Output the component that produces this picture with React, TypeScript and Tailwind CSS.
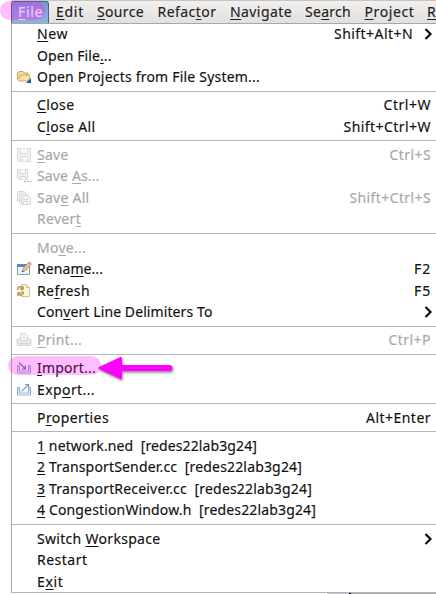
import React, { useLayoutEffect, useRef } from "react";

type LabelProps = { text: string; width: number };

// A label with an underlined mnemonic: the character after "&".
// Letter spacing is set so that the label fills its column width.
function Label({ text, width }: LabelProps) {
  const ref = useRef<HTMLSpanElement>(null);
  const at = text.indexOf("&");
  const plain = text.replace("&", "");
  useLayoutEffect(() => {
    const el = ref.current;
    if (!el) return;
    el.style.letterSpacing = "0px";
    const natural = el.getBoundingClientRect().width;
    el.style.letterSpacing = `${(width - natural) / plain.length}px`;
  }, [plain, width]);
  return (
    <span ref={ref} className="inline-block shrink-0 whitespace-pre">
      {at < 0 ? (
        plain
      ) : (
        <>
          {plain.slice(0, at)}
          <span className="underline decoration-1 underline-offset-2">{plain[at]}</span>
          {plain.slice(at + 1)}
        </>
      )}
    </span>
  );
}

function FolderIcon() {
  return (
    <svg width="16" height="16" viewBox="0 0 16 16">
      <path d="M1.5 10.500V4L3 2.5h4L8.500 4H12v3" fill="#f3d9a0" stroke="#c6a063" />
      <path d="M1.500 10.500l1.500 1.500h9.500l1.500-6H4.500L3 10.500" fill="#fbe2a6" stroke="#cda866" strokeLinejoin="round" />
      <path d="M15 9v5h-5z" fill="#17609f" />
    </svg>
  );
}

function SaveIcon() {
  return (
    <svg width="16" height="16" viewBox="0 0 16 16" stroke="#d8dada" fill="#f0f1f1">
      <path d="M1.5 1.5h13v13h-12l-1-1z" />
      <path d="M4.5 1.5v5h7v-5M4.5 14.5v-5h7v5M6.5 11v3" fill="#fafafa" />
    </svg>
  );
}

function SaveAsIcon() {
  return (
    <svg width="16" height="16" viewBox="0 0 16 16" stroke="#d6d8d8" fill="#f0f1f1">
      <path d="M1.5 1.5h10v10h-9l-1-1z" />
      <path d="M4 1.5v4h5.5v-4M4 11.5v-3h5.5v3M6 9.5v2" fill="#fafafa" />
      <path d="M8 13.5h2M11 13.5h2M14 13.5h1.5" stroke="#bfc0c0" strokeWidth="1.4" />
    </svg>
  );
}

function SaveAllIcon() {
  return (
    <svg width="16" height="16" viewBox="0 0 16 16" stroke="#d6d8d8" fill="#f3f3f3">
      <path d="M1.5 11V1.5h7l2 2V11z" />
      <path d="M3.5 13V3.5h7l2 2V13z" />
      <path d="M5.5 14.500V5.500h7l2 2v7z" />
      <path d="M7.5 7.500v2h4v-2M7.5 14v-2.5h4V14" fill="#fafafa" />
    </svg>
  );
}

function RenameIcon() {
  return (
    <svg width="16" height="16" viewBox="0 0 16 16">
      <path d="M1.5 3.5h12v10h-12z" fill="#e9f5fc" stroke="#8c9aa2" />
      <path d="M1 3h12.500v3H1z" fill="#4a8ac6" />
      <path d="M6 11l1-3.5L13 1l2.3 2L9 10z" fill="#edc294" stroke="#bd8763" strokeWidth=".7" />
      <path d="M12.3 1.8L13.5.5l2 2-1.2 1.3z" fill="#cf8f93" />
      <path d="M6 11l.5-1.7L8 10.4z" fill="#3b454c" />
    </svg>
  );
}

function RefreshIcon() {
  return (
    <svg width="16" height="16" viewBox="0 0 16 16">
      <path d="M5.500 1.500h5l3 3v9h-8z" fill="#f8f5e2" stroke="#cdc298" />
      <path d="M10.500 1.500v3h3" fill="#fffbea" stroke="#cdbf90" />
      <path d="M2 7C1 4 4.500 2.800 6.300 5M7 3.300V6H4.200M7 8.500c1 3.600-2.700 4.500-4.500 2.500M2 12.800V10h2.800" fill="none" stroke="#b98a40" strokeWidth="1.600" />
      <path d="M2 7C1 4 4.500 2.800 6.300 5M7 8.500c1 3.600-2.700 4.500-4.500 2.500" fill="none" stroke="#e8c273" strokeWidth=".8" />
    </svg>
  );
}

function PrintIcon() {
  return (
    <svg width="16" height="16" viewBox="0 0 16 16" stroke="#d6d8d8">
      <path d="M2.5 6.5h11q1.500 0 1.500 2v3.500q0 1.5-1.500 1.5h-11q-1.500 0-1.500-1.5V8.500q0-2 1.500-2z" fill="#e6e7e7" />
      <path d="M4.5 8.500v-7h5l2 2v5z" fill="#fafafa" />
      <path d="M6 4h3M6 6h4M3.500 11.500h9" fill="none" />
    </svg>
  );
}

// Open tray with an arrow going in or out of it.
function TransferIcon({ out = false }: { out?: boolean }) {
  return (
    <svg className="ml-[-0.5px]" width="16" height="16" viewBox="0 0 16 16" fill="none">
      <path d="M3.500 5.500h-2v7.500h13V5.500h-2M3.500 5.500v5.500h9V5.500" stroke="#87a5ca" strokeWidth=".9" />
      <path d="M2.500 6v6h11V6" stroke="#cfdff0" strokeWidth=".9" />
      {out ? (
        <path d="M5.500 9.500L12 3M9 2.500h3.500v3.200" stroke="#6ba3c4" strokeWidth="1.100" />
      ) : (
        <path d="M3 2.500l6 6M9.400 5.500v3.500H5.900" stroke="#56799f" strokeWidth="1.100" />
      )}
    </svg>
  );
}

type Item = {
  label: string;
  width: number;
  keys?: string;
  keysWidth?: number;
  icon?: React.ReactNode;
  disabled?: boolean;
  submenu?: boolean;
  marked?: boolean;
};

const groups: Item[][] = [
  [
    { label: "&New", width: 31, keys: "Shift+Alt+N", keysWidth: 79, submenu: true },
    { label: "Open File&...", width: 74.5 },
    { label: "Open Projects from File System...", width: 223, icon: <FolderIcon /> },
  ],
  [
    { label: "&Close", width: 37.5, keys: "Ctrl+W", keysWidth: 47.5 },
    { label: "C&lose All", width: 58.5, keys: "Shift+Ctrl+W", keysWidth: 87.5 },
  ],
  [
    { label: "&Save", width: 31.5, keys: "Ctrl+S", keysWidth: 41.5, icon: <SaveIcon />, disabled: true },
    { label: "Save &As...", width: 62.5, icon: <SaveAsIcon />, disabled: true },
    { label: "Sav&e All", width: 52.5, keys: "Shift+Ctrl+S", keysWidth: 81.5, icon: <SaveAllIcon />, disabled: true },
    { label: "Rever&t", width: 44, disabled: true },
  ],
  [
    { label: "Mo&ve...", width: 49, disabled: true },
    { label: "Rena&me...", width: 66, keys: "F2", keysWidth: 17, icon: <RenameIcon /> },
    { label: "Re&fresh", width: 53, keys: "F5", keysWidth: 17, icon: <RefreshIcon /> },
    { label: "Con&vert Line Delimiters To", width: 175.5, submenu: true },
  ],
  [{ label: "&Print...", width: 45, keys: "Ctrl+P", keysWidth: 42.5, icon: <PrintIcon />, disabled: true }],
  [
    { label: "&Import...", width: 59, icon: <TransferIcon />, marked: true },
    { label: "Exp&ort...", width: 58, icon: <TransferIcon out /> },
  ],
  [{ label: "P&roperties", width: 72, keys: "Alt+Enter", keysWidth: 65 }],
  [
    { label: "&1 network.ned  [redes22lab3g24]", width: 220 },
    { label: "&2 TransportSender.cc  [redes22lab3g24]", width: 265 },
    { label: "&3 TransportReceiver.cc  [redes22lab3g24]", width: 275 },
    { label: "&4 CongestionWindow.h  [redes22lab3g24]", width: 279 },
  ],
  [
    { label: "Switch &Workspace", width: 123.5, submenu: true },
    { label: "Restart", width: 50.5 },
    { label: "E&xit", width: 26.5 },
  ],
];

// Highlighter stroke and pointer laid over the Import row.
function ImportMark() {
  return (
    <>
      <div className="absolute top-[-1px] left-[-4px] h-[19px] w-[93px] rounded-full bg-[#ff00ff]/25" />
      <svg className="absolute top-[-2px] left-[83px] overflow-visible drop-shadow-[1px_2px_1px_rgba(0,0,0,0.4)]" width="80" height="26" viewBox="0 0 80 26">
        <path d="M5 13L25.500 3.500V22.500z" fill="#f0f" stroke="#f0f" strokeWidth="3" strokeLinejoin="round" />
        <path d="M24 13H74.500" stroke="#f0f" strokeWidth="6" strokeLinecap="round" />
      </svg>
    </>
  );
}

function Row({ item }: { item: Item }) {
  return (
    <div
      className={`relative flex h-[21.5px] items-center pr-[5px] pl-[4px] ${item.disabled ? "text-[#aaa6a3]" : "text-[#101010]"}`}
    >
      <div className="flex w-[21px] shrink-0">{item.icon}</div>
      <Label text={item.label} width={item.width} />
      <div className="ml-auto flex items-center">
        {item.keys && <Label text={item.keys} width={item.keysWidth ?? 40} />}
        {item.submenu && (
          <svg className="mr-[-3px] ml-[10px]" width="11" height="14" viewBox="0 0 11 14">
            <path d="M2.500 2l5 5-5 5" fill="none" stroke="#111" strokeWidth="2.2" />
          </svg>
        )}
      </div>
      {item.marked && <ImportMark />}
    </div>
  );
}

const bar = [
  { label: "&Edit", width: 28, box: "w-[41px]" },
  { label: "&Source", width: 47, box: "w-[60.5px]" },
  { label: "Refac&tor", width: 59, box: "w-[72.5px]" },
  { label: "&Navigate", width: 62, box: "w-[75px]" },
  { label: "Se&arch", width: 46, box: "w-[59.500px]" },
  { label: "&Project", width: 50, box: "w-[62.5px]" },
  { label: "&R", width: 9, box: "w-[9px]" },
];

export default function App() {
  return (
    <div className="relative flex h-[594px] w-[436px] flex-col overflow-hidden bg-white pl-[11px] font-['Noto_Sans','Open_Sans',sans-serif] text-[14px] leading-[20px] text-[#222] [-webkit-text-stroke:0.15px]">
      <div className="flex h-[22.5px] shrink-0 border-t border-[#c7c5c2] bg-gradient-to-b from-[#f1f0ef] to-[#e2e0de]">
        <div className="flex w-[38px] shrink-0 items-center rounded-t-[3px] border border-b-0 border-[#40648f] bg-gradient-to-b from-[#789bd0] to-[#8db2df] pl-[6px] text-white">
          <Label text="&File" width={25} />
        </div>
        <div className="flex shrink-0 items-center pt-px pl-[7px]">
          {bar.map((entry) => (
            <div key={entry.label} className={`shrink-0 ${entry.box}`}>
              <Label text={entry.label} width={entry.width} />
            </div>
          ))}
        </div>
        <div className="absolute top-[1px] left-0 h-[19px] w-[45px] rounded-full bg-[#ff00ff]/25" />
      </div>
      <div className="shrink-0 border-t border-l border-[#aaa8a6] bg-white">
        {groups.map((items, index) => (
          <React.Fragment key={index}>
            {index > 0 && (
              <div className="flex h-[6.6px] items-center">
                <div className="h-px w-full bg-[#b9b8b6]" />
              </div>
            )}
            {items.map((item) => (
              <Row key={item.label} item={item} />
            ))}
          </React.Fragment>
        ))}
      </div>
      <div className="flex h-[2px] shrink-0 border-t border-[#b5b4b2] bg-white">
        <div className="ml-[316px] h-px w-[22px] bg-[#c3cbd2]" />
        <div className="h-px w-[2px] bg-black" />
        <div className="h-px flex-1 bg-[#aaa]" />
      </div>
    </div>
  );
}
